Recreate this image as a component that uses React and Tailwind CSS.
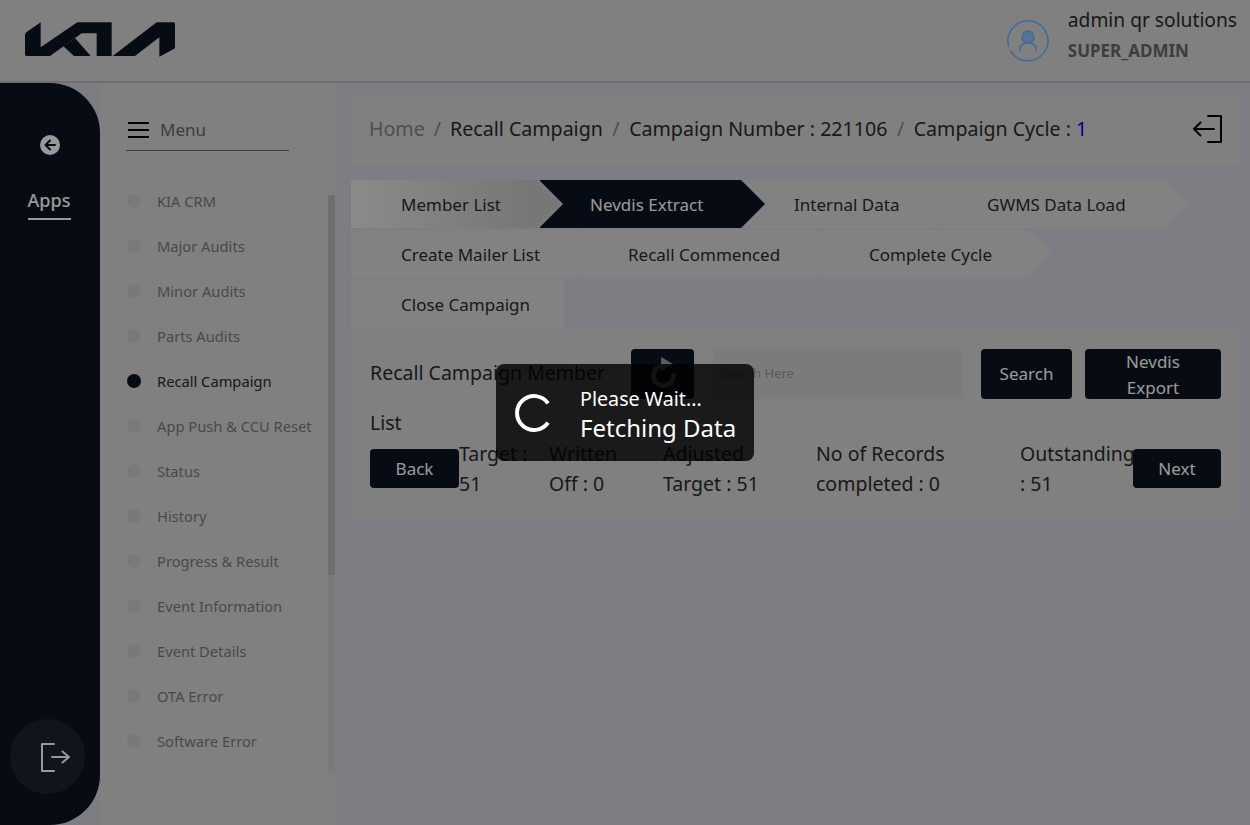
import React from 'react';

const menuItems = [
  'KIA CRM',
  'Major Audits',
  'Minor Audits',
  'Parts Audits',
  'Recall Campaign',
  'App Push & CCU Reset',
  'Status',
  'History',
  'Progress & Result',
  'Event Information',
  'Event Details',
  'OTA Error',
  'Software Error',
];

const stepRows = [
  [
    { label: 'Member List', width: 'w-[186px]', z: 'z-[9]', kind: 'done' },
    { label: 'Nevdis Extract', width: 'w-[201px]', z: 'z-[8]', kind: 'active' },
    { label: 'Internal Data', width: 'w-[190px]', z: 'z-[7]' },
    { label: 'GWMS Data Load', width: 'w-[228px]', z: 'z-[6]' },
  ],
  [
    { label: 'Create Mailer List', width: 'w-[224px]', z: 'z-[5]' },
    { label: 'Recall Commenced', width: 'w-[238px]', z: 'z-[4]' },
    { label: 'Complete Cycle', width: 'w-[209px]', z: 'z-[3]' },
  ],
  [{ label: 'Close Campaign', width: 'w-[213px]', z: 'z-[2]', noTip: true }],
];

const stats = [
  { lines: ['Target :', '51'], width: 'w-[90px]' },
  { lines: ['Written', 'Off : 0'], width: 'w-[114px]' },
  { lines: ['Adjusted', 'Target : 51'], width: 'w-[153px]' },
  { lines: ['No of Records', 'completed : 0'], width: 'w-[204px]' },
  { lines: ['Outstanding', ': 51'], width: 'w-[113px]' },
];

function KiaLogo() {
  return (
    <svg width="150" height="35" viewBox="75 66 450 105" fill="#0d1522">
      <path d="M75 105 Q75 100 80 96 L122 67 L122 142 L232 67 L335 67 L335 168 L290 168 L290 100 L245 100 L150 168 L80 168 Q75 168 75 163 Z" />
      <path d="M190 139 L225 114 L272 168 L222 168 Z" />
      <path d="M338 168 L470 67 L520 67 Q525 67 525 72 L525 142 Q525 146 520 148 L478 170 L478 112 L405 168 Z" />
    </svg>
  );
}

function UserIcon() {
  return (
    <svg width="42" height="42" viewBox="0 0 42 42" fill="none" stroke="#68b4ff" strokeWidth="1.5">
      <path d="M1.600 26 A20 20 0 1 1 4 31.500" strokeLinecap="round" />
      <circle cx="21" cy="17" r="6" fill="#96bbfa" />
      <path d="M12.700 31 C12.700 25 16 23 21 23 C26 23 29.300 25 29.300 31" strokeLinecap="round" />
    </svg>
  );
}

function Step({ step }) {
  const isActive = step.kind === 'active';
  const isDone = step.kind === 'done';
  let bg = 'bg-[#d9d9d9]';
  let tip = 'bg-[#d9d9d9]';
  if (isActive) {
    bg = 'bg-[#0d1522] text-[#ffffff]';
    tip = 'bg-[#0d1522]';
  }
  if (isDone) {
    bg = 'bg-gradient-to-r from-[#e6e6e6] to-[#c6c6c6]';
    tip = 'bg-[#c6c6c6]';
  }
  const edge = isActive || isDone ? 'left-[calc(100%+2px)]' : 'left-[calc(100%+1px)]';
  return (
    <div className={`relative h-12 mr-[3px] pl-[50px] pt-[2px] flex items-center shrink-0 text-[17px] ${step.width} ${step.z} ${bg}`}>
      <span className="whitespace-nowrap">{step.label}</span>
      {!step.noTip && (
        <>
          <div className={`absolute top-0 w-6 h-12 bg-[#cfd2dc] [clip-path:polygon(0_0,100%_50%,0_100%)] ${edge}`} />
          <div className={`absolute top-0 left-full w-6 h-12 [clip-path:polygon(0_0,100%_50%,0_100%)] ${tip}`} />
        </>
      )}
    </div>
  );
}

export default function App() {
  return (
    <div className="relative h-screen w-full overflow-hidden flex flex-col bg-[#cfd2dc] text-[#2b2b2b] font-['Noto_Sans',sans-serif]">
      {/* Header */}
      <header className="h-[83px] shrink-0 flex items-center justify-between bg-[#d5d5d5] border-b-2 border-[#b9b9b9] pl-[25px] pr-[13px]">
        <div className="-mt-[3px]">
          <KiaLogo />
        </div>
        <div className="flex items-center gap-[19px]">
          <UserIcon />
          <div className="flex flex-col mb-[7px]">
            <span className="text-[19.200px] leading-[28px]">admin qr solutions</span>
            <span className="text-[17px] leading-[34px] font-bold text-[#676767]">SUPER_ADMIN</span>
          </div>
        </div>
      </header>

      <div className="flex flex-1 min-h-0">
        {/* Dark rail */}
        <aside className="w-[100px] shrink-0 bg-[#0d1522] rounded-r-[50px] flex flex-col justify-between items-center text-white">
          <div className="flex flex-col items-center pt-[52px]">
            <svg width="20" height="20" viewBox="0 0 20 20">
              <circle cx="10" cy="10" r="10" fill="#ffffff" />
              <path d="M15 10H6M10 5.500 5.500 10l4.500 4.500" fill="none" stroke="#0d1522" strokeWidth="2" strokeLinecap="round" strokeLinejoin="round" />
            </svg>
            <div className="mt-[29px] text-[18px] font-medium leading-[32px] border-b-2 border-white w-[43px] text-center pb-[2px] -ml-[2px]">Apps</div>
          </div>
          <div className="w-[75px] h-[75px] rounded-full bg-[#1b2330] flex items-center justify-center pl-[16px] mb-[31px] -ml-[6px]">
            <svg width="30" height="30" viewBox="0 0 30 30" fill="none" stroke="#ffffff" strokeWidth="2" strokeLinecap="round" strokeLinejoin="round">
              <path d="M14 2H2v27h12" />
              <path d="M12 15h17M22.500 9.500 29 15l-6.500 5.500" />
            </svg>
          </div>
        </aside>

        {/* Menu panel */}
        <nav className="w-[238px] shrink-0 bg-[#d5d5d5] flex flex-col">
          <div className="ml-[26px] w-[163px] h-[68px] flex items-center gap-[11px] border-b border-[#67677b] pl-[2px] pt-[34px] pb-[7px]">
            <svg width="21" height="16" viewBox="0 0 21 16" stroke="#000000" strokeWidth="2">
              <path d="M0 1h21M0 8h21M0 15h21" />
            </svg>
            <span className="text-[17px] text-[#676767]">Menu</span>
          </div>
          <div className="relative mt-[44px] h-[578px] pl-[27px] pr-[10px] flex">
            <ul className="flex-1 -mt-[16.500px]">
              {menuItems.map((item) => {
                const active = item === 'Recall Campaign';
                return (
                  <li key={item} className="h-[45px] flex items-center gap-[16px] text-[14.700px]">
                    <span className={`w-[14px] h-[14px] rounded-full shrink-0 ${active ? 'bg-[#0d1522]' : 'bg-[#cacaca]'}`} />
                    <span className={`whitespace-nowrap ${active ? 'text-[#2b2b2b]' : 'text-[#7b7b7b]'}`}>{item}</span>
                  </li>
                );
              })}
            </ul>
            <div className="absolute top-0 right-[3px] w-[7px] h-full bg-[#cbcbcb]">
              <div className="h-[380px] bg-[#b7b7b7]" />
            </div>
          </div>
        </nav>

        {/* Main */}
        <main className="flex-1 min-w-0 pl-[12px] pr-[9px] pt-[14px]">
          <div className="h-[68px] bg-[#d5d5d5] pl-[19px] pr-[19px] pb-[4px] flex items-center justify-between text-[19.600px]">
            <div className="flex items-center whitespace-nowrap">
              <span className="text-[#848484]">Home</span>
              <span className="mx-[9px] text-[#848484]">/</span>
              <span>Recall Campaign</span>
              <span className="mx-[9.500px] text-[#848484]">/</span>
              <span>Campaign Number : 221106</span>
              <span className="mx-[9.500px] text-[#848484]">/</span>
              <span>Campaign Cycle : <span className="text-[#0000e8]">1</span></span>
            </div>
            <svg width="30" height="30" viewBox="0 0 30 30" fill="none" stroke="#000000" strokeWidth="2" strokeLinecap="round" strokeLinejoin="round">
              <path d="M16 2h13v26H16" />
              <path d="M22 15H2M8.500 8.500 2 15l6.500 6.500" />
            </svg>
          </div>

          <div className="mt-[15px] pl-[1px]">
            {stepRows.map((row, i) => (
              <div key={i} className="flex mb-[2px] last:mb-0">
                {row.map((step) => (
                  <Step key={step.label} step={step} />
                ))}
              </div>
            ))}
          </div>

          <section className="bg-[#d5d5d5] px-[20px] pt-[21px] pb-[21px]">
            <div className="flex items-start">
              <div className="w-[261px] -mt-[1px] mb-[1px] text-[19.500px] leading-[50px]">Recall Campaign Member List</div>
              <button className="w-[63px] h-[50px] rounded bg-[#0d1522] flex items-center justify-center">
                <svg width="30" height="34" viewBox="0 0 30 34" fill="none">
                  <path d="M25 16A10 10 0 1 1 13 9" stroke="#9a9a9a" strokeWidth="4.500" />
                  <path d="M13 0l12 7-12 7z" fill="#9a9a9a" />
                </svg>
              </button>
              <div className="ml-[19px] w-[250px] h-[50px] rounded bg-[#cdcdcd] pl-[7px] flex items-center text-[13px] text-[#969696]">Search Here</div>
              <button className="ml-[18px] w-[91px] h-[50px] rounded bg-[#0d1522] text-white text-[17px]">Search</button>
              <button className="ml-[13px] w-[136px] h-[50px] rounded bg-[#0d1522] text-white text-[17px] leading-[26px] px-[30px]">Nevdis Export</button>
            </div>
            <div className="flex items-start">
              <button className="w-[89px] h-[39px] rounded bg-[#0d1522] text-white text-[17px]">Back</button>
              {stats.map((stat) => (
                <div key={stat.lines[0]} className={`-mt-[10px] text-[19.500px] leading-[30px] whitespace-nowrap ${stat.width}`}>
                  <div>{stat.lines[0]}</div>
                  <div>{stat.lines[1]}</div>
                </div>
              ))}
              <button className="w-[88px] h-[39px] rounded bg-[#0d1522] text-white text-[17px]">Next</button>
            </div>
          </section>
        </main>
      </div>

      {/* Loading overlay */}
      <div className="absolute inset-0 bg-black/40 flex items-center justify-center z-20">
        <div className="w-[258px] h-[97px] rounded-lg bg-black/80 flex items-center pl-[17px] text-white">
          <svg width="38" height="40" viewBox="0 0 38 40" fill="none" className="shrink-0">
            <path d="M35 10.300A17 17 0 1 0 35 29.700" stroke="#ffffff" strokeWidth="4" />
          </svg>
          <div className="ml-[29px] pt-[4px] flex flex-col">
            <span className="text-[19.700px] leading-[26px]">Please Wait...</span>
            <span className="text-[24px] leading-[32px]">Fetching Data</span>
          </div>
        </div>
      </div>
    </div>
  );
}
